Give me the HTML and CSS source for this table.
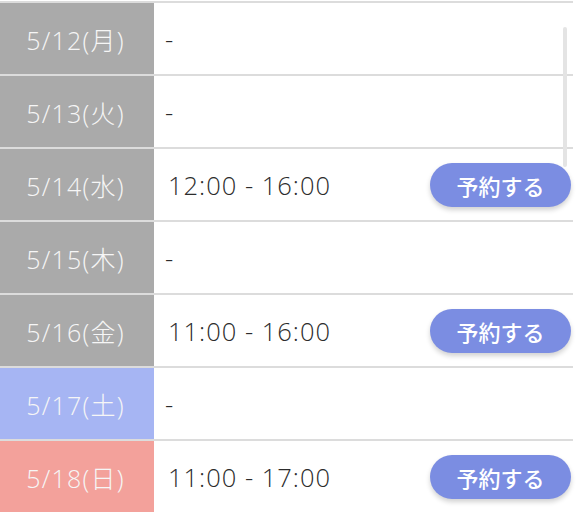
FILE: index.html
```html
<!DOCTYPE html>
<html lang="ja">
<head>
<meta charset="utf-8">
<link rel="stylesheet" href="styles.css">
</head>
<body>
<div class="schedule">
  <div class="row">
    <div class="date weekday">5/12(月)</div>
    <div class="slot"><span class="time dash">-</span></div>
  </div>
  <div class="row">
    <div class="date weekday">5/13(火)</div>
    <div class="slot"><span class="time dash">-</span></div>
  </div>
  <div class="row">
    <div class="date weekday">5/14(水)</div>
    <div class="slot"><span class="time">12:00 - 16:00</span><button class="reserve">予約する</button></div>
  </div>
  <div class="row">
    <div class="date weekday">5/15(木)</div>
    <div class="slot"><span class="time dash">-</span></div>
  </div>
  <div class="row">
    <div class="date weekday">5/16(金)</div>
    <div class="slot"><span class="time">11:00 - 16:00</span><button class="reserve">予約する</button></div>
  </div>
  <div class="row">
    <div class="date saturday">5/17(土)</div>
    <div class="slot"><span class="time dash">-</span></div>
  </div>
  <div class="row">
    <div class="date sunday">5/18(日)</div>
    <div class="slot"><span class="time">11:00 - 17:00</span><button class="reserve">予約する</button></div>
  </div>
  <div class="scrollbar"></div>
</div>
</body>
</html>
```

FILE: styles.css
```css
html, body {
  margin: 0;
  padding: 0;
  background: #ffffff;
  overflow: hidden;
}
body {
  padding-top: 1px;
  font-family: "Open Sans", "Noto Sans CJK JP", sans-serif;
}
.schedule {
  position: relative;
  width: 573px;
}
.row {
  display: flex;
  height: 71px;
  border-top: 2px solid #dcdcdc;
}
.date {
  width: 154px;
  flex: none;
  display: flex;
  align-items: center;
  justify-content: center;
  color: #f6f6f6;
  font-family: "Open Sans", "Noto Sans CJK JP", sans-serif;
  font-size: 25px;
  font-weight: 300;
  letter-spacing: 1.2px;
  padding-right: 3px;
  box-sizing: border-box;
}
.weekday { background: #aaaaaa; }
.saturday { background: #a6b5f3; }
.sunday { background: #f3a19b; }
.slot {
  flex: 1;
  display: flex;
  align-items: center;
  justify-content: space-between;
  padding-left: 14px;
  padding-right: 2px;
}
.time {
  font-family: "Open Sans", "Noto Sans", sans-serif;
  font-size: 25.5px;
  font-weight: 300;
  letter-spacing: 1px;
  color: #2c2c2c;
  padding-top: 1px;
}
.dash {
  margin-left: -3px;
}
.reserve {
  position: relative;
  z-index: 2;
  width: 141px;
  height: 44px;
  border: none;
  border-radius: 22px;
  background: #7b8de2;
  color: #ffffff;
  font-family: "Noto Sans CJK JP", sans-serif;
  font-size: 22px;
  font-weight: 500;
  box-shadow: 0 3px 5px rgba(0, 0, 0, 0.18);
  padding: 0;
}
.scrollbar {
  position: absolute;
  left: 563px;
  top: 26px;
  width: 4px;
  height: 140px;
  border-radius: 2px;
  background: #e4e4e4;
  z-index: 1;
}
```
